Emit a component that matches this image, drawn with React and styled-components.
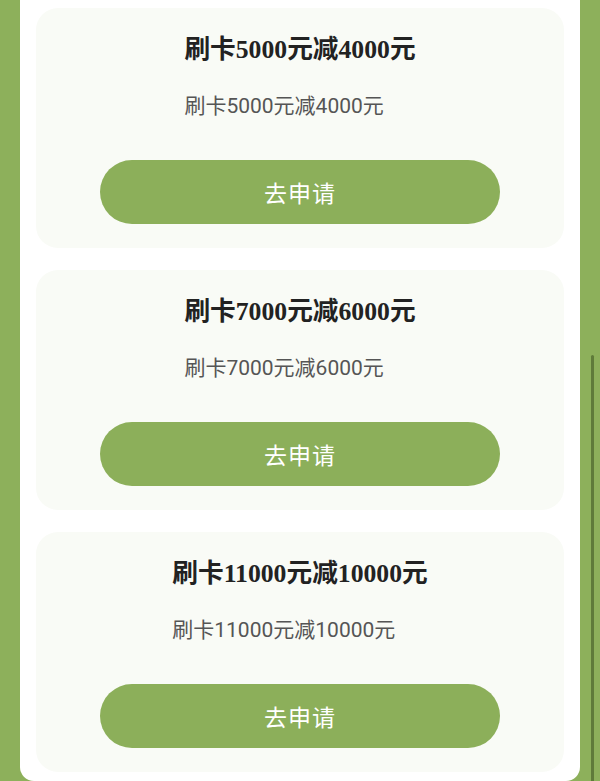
import React from "react";
import styled, { createGlobalStyle } from "styled-components";

const Global = createGlobalStyle`
  html, body {
    margin: 0;
    padding: 0;
    background: #8db05b;
  }
  body {
    font-family: "Noto Sans CJK SC", "Noto Sans", sans-serif;
  }
`;

const Page = styled.div`
  position: relative;
  min-height: 781px;
  padding: 0 20px;
  box-sizing: border-box;
`;

const Panel = styled.div`
  background: #ffffff;
  border-radius: 0 0 14px 14px;
  padding: 8px 16px 9px;
  display: flex;
  flex-direction: column;
  gap: 22px;
`;

const Card = styled.div`
  background: #f9fbf6;
  border-radius: 22px;
  padding: 24px 0;
  display: flex;
  flex-direction: column;
  align-items: center;
`;

const TextBlock = styled.div`
  display: flex;
  flex-direction: column;
  align-items: flex-start;
`;

const Title = styled.div`
  font-family: "Liberation Serif", "Noto Sans CJK SC", serif;
  font-weight: 700;
  font-size: 25.7px;
  line-height: 36px;
  color: #222222;
`;

const Sub = styled.div`
  margin-top: 20px;
  font-family: "Roboto", "Noto Sans CJK SC", sans-serif;
  font-size: 21px;
  line-height: 36px;
  color: #555555;
`;

const Button = styled.button`
  margin-top: 36px;
  width: 400px;
  height: 64px;
  border: none;
  border-radius: 32px;
  background: #8caf5a;
  color: #ffffff;
  font-family: "Noto Sans CJK SC", sans-serif;
  font-size: 23px;
  letter-spacing: 1px;
  cursor: pointer;
`;

const ScrollThumb = styled.div`
  position: absolute;
  left: 591px;
  top: 355px;
  width: 3px;
  height: 430px;
  border-radius: 2px;
  background: #5f7b3a;
`;

const items = [
  ["5000", "4000"],
  ["7000", "6000"],
  ["11000", "10000"],
];

export default function App() {
  return (
    <>
      <Global />
      <Page>
        <Panel>
          {items.map(([a, b]) => (
            <Card key={a}>
              <TextBlock>
                <Title>{`刷卡${a}元减${b}元`}</Title>
                <Sub>{`刷卡${a}元减${b}元`}</Sub>
              </TextBlock>
              <Button>去申请</Button>
            </Card>
          ))}
        </Panel>
        <ScrollThumb />
      </Page>
    </>
  );
}
